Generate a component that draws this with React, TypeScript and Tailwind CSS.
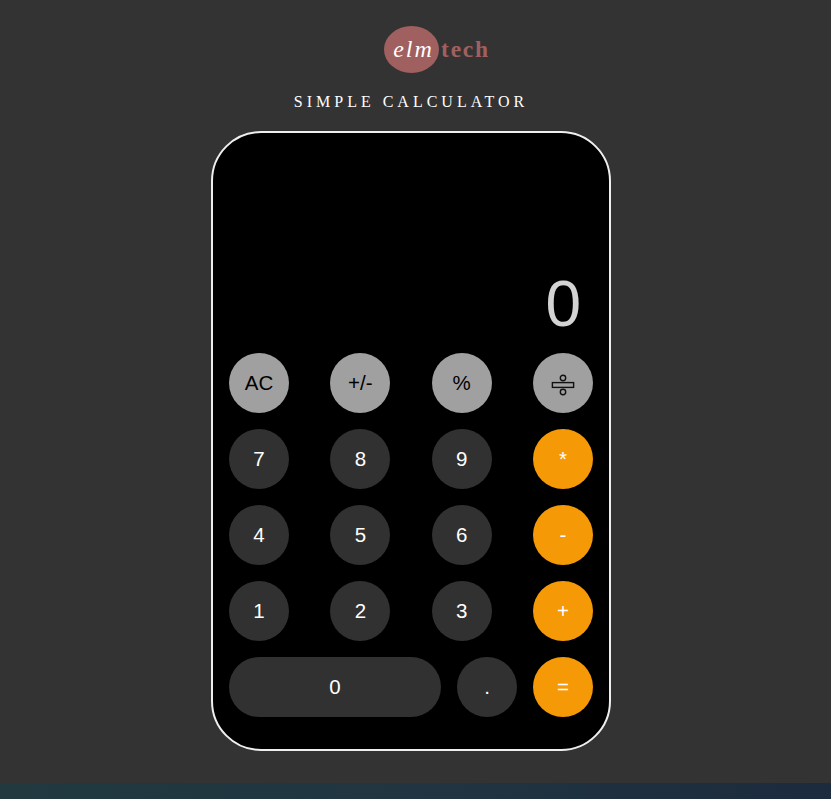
import type { ReactNode } from "react";

type Tone = "light" | "dark" | "orange";

const tones: Record<Tone, string> = {
  light: "bg-[#a0a0a0] text-black",
  dark: "bg-[#313131] text-white",
  orange: "bg-[#f69906] text-white",
};

function Key({ tone, wide, children }: { tone: Tone; wide?: boolean; children: ReactNode }) {
  return (
    <button
      className={`flex h-[60px] items-center justify-center rounded-full text-[20.5px] leading-6 ${
        wide ? "w-[212px]" : "w-[60px]"
      } ${tones[tone]}`}
    >
      {children}
    </button>
  );
}

function DivideIcon() {
  return (
    <svg className="mt-1" width="24" height="24" viewBox="0 0 24 24" fill="none" stroke="#111" strokeWidth="1.4">
      <circle cx="12" cy="5" r="2.7" />
      <rect x="1.4" y="9.6" width="21.2" height="4.8" />
      <circle cx="12" cy="19" r="2.7" />
    </svg>
  );
}

const rows = [
  ["7", "8", "9", "*"],
  ["4", "5", "6", "-"],
  ["1", "2", "3", "+"],
];

export default function App() {
  return (
    <div className="flex h-[799px] w-full flex-col bg-linear-to-r from-[#21393f] via-[#203541] to-[#1c2b3e]">
      <div className="flex h-[783px] flex-col items-center bg-[#333333] pr-[9px]">
        <div className="mt-[26px] ml-[52px] flex h-[47px] items-center font-['Liberation_Serif',serif] text-[24px] leading-7 tracking-[2px]">
          <span className="flex h-[47px] w-[55px] items-center justify-center rounded-[50%] bg-[#a06060] pb-0.5 pl-1 text-white italic">
            elm
          </span>
          <span className="ml-[2px] pb-0.5 text-[23.5px] font-bold tracking-[1.8px] text-[#a06060]">tech</span>
        </div>
        <h1 className="mt-[19px] h-5 font-['Liberation_Serif',serif] text-[16px] leading-5 tracking-[4px] text-white">
          SIMPLE CALCULATOR
        </h1>
        <main className="mt-[19px] flex h-[620px] w-[400px] flex-col rounded-[50px] border-2 border-[#f0eeee] bg-black px-4 font-['Liberation_Sans',Arial,sans-serif]">
          <div className="flex h-[220px] items-end justify-end pr-3 pb-[13px] text-[64px] leading-[72px] text-[#d3d3d3]">
            0
          </div>
          <div className="flex flex-col gap-4">
            <div className="flex justify-between">
              <Key tone="light">AC</Key>
              <Key tone="light">+/-</Key>
              <Key tone="light">%</Key>
              <Key tone="light">
                <DivideIcon />
              </Key>
            </div>
            {rows.map((row) => (
              <div key={row[0]} className="flex justify-between">
                {row.map((label, i) => (
                  <Key key={label} tone={i === 3 ? "orange" : "dark"}>
                    {label}
                  </Key>
                ))}
              </div>
            ))}
            <div className="flex justify-between">
              <Key tone="dark" wide>
                0
              </Key>
              <Key tone="dark">.</Key>
              <Key tone="orange">=</Key>
            </div>
          </div>
        </main>
      </div>
    </div>
  );
}
